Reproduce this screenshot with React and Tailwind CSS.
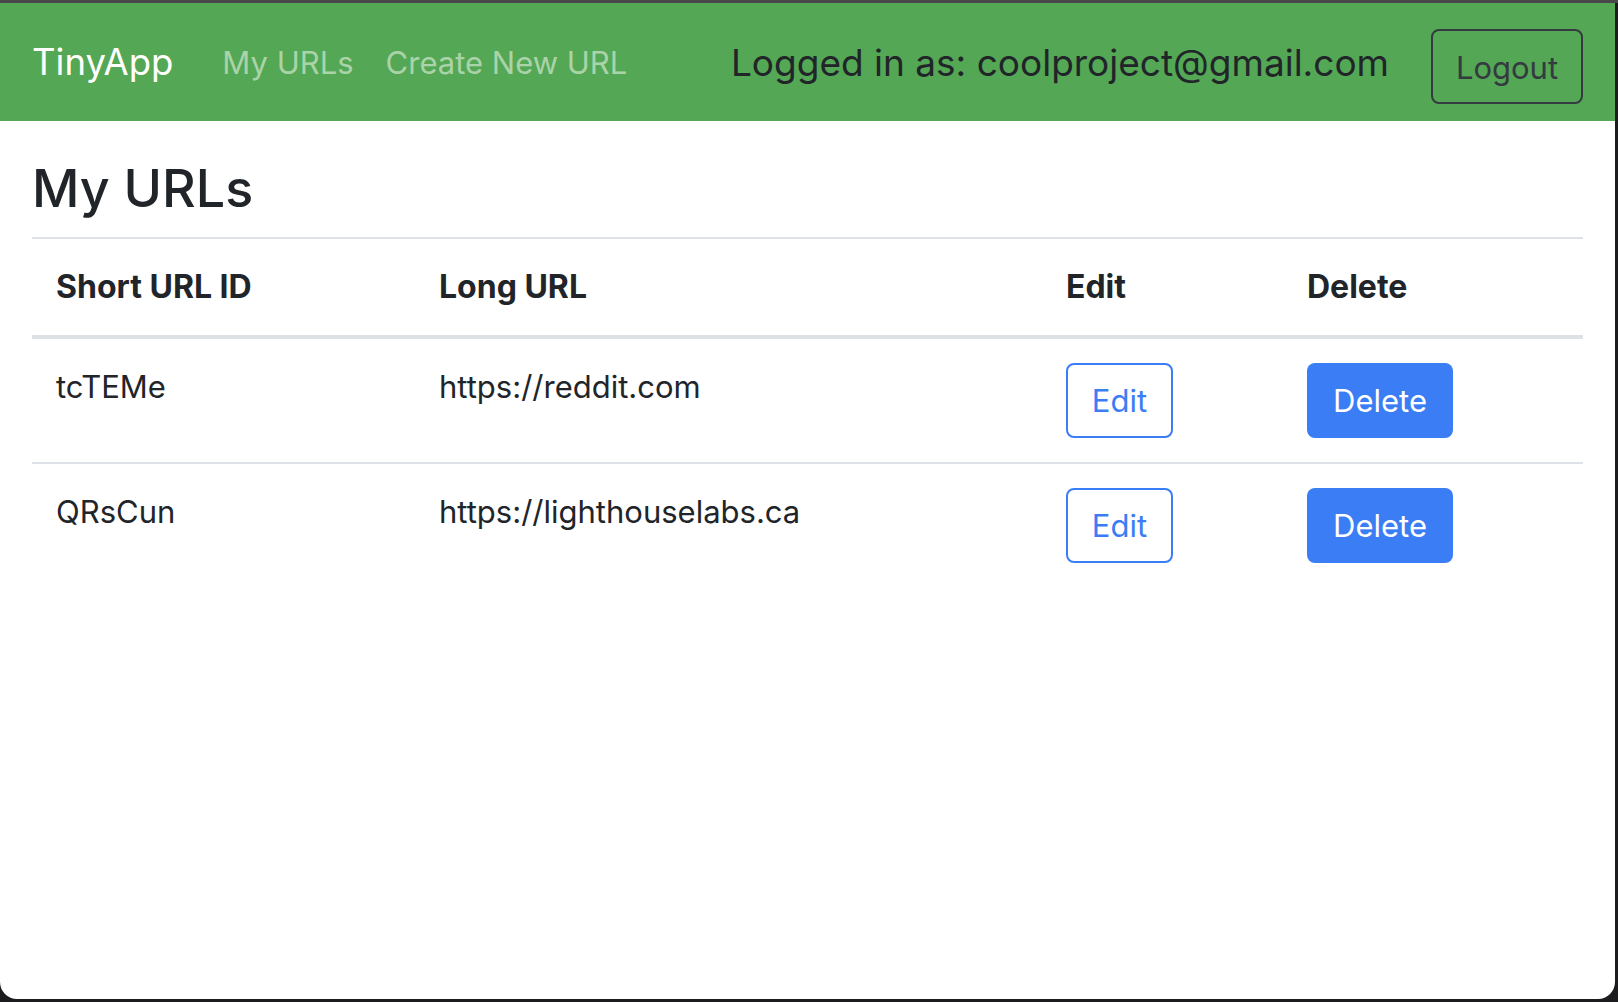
const rows = [
  { id: "tcTEMe", url: "https://reddit.com" },
  { id: "QRsCun", url: "https://lighthouselabs.ca" },
];

const Navbar = () => {
  return (
    <nav className="h-[118px] bg-[#54a754] px-[32px] flex items-center">
      <a className="text-[36.5px] text-white leading-none mr-[49px]">TinyApp</a>
      <div className="flex items-center gap-[32px] text-[31px] text-[#aad3a9] leading-none">
        <a>My URLs</a>
        <a>Create New URL</a>
      </div>
      <div className="ml-auto flex items-center">
        <span className="text-[37px] text-[#212529] leading-none">Logged in as: coolproject@gmail.com</span>
        <button className="ml-[42px] mt-[9px] w-[152px] h-[75px] pt-[3px] border-2 border-[#343a40] rounded-[8px] text-[31px] text-[#343a40] flex items-center justify-center">
          Logout
        </button>
      </div>
    </nav>
  );
};

const App = () => {
  return (
    <div className="w-[1618px] h-[1002px] bg-[#1c1c1e] overflow-hidden font-['Inter','Liberation_Sans',sans-serif]">
      <div className="h-[3px] bg-[#48484a]" />
      <div className="w-[1615px] h-[996px] bg-white rounded-b-[17px] overflow-hidden">
        <Navbar />
        <main className="px-[32px]">
          <h1 className="mt-[37px] text-[52px] font-medium leading-[1.2] text-[#212529]">My URLs</h1>
          <table className="mt-[17px] w-[1551px] table-fixed border-collapse text-[31px] leading-[48px] text-[#212529]">
            <colgroup>
              <col className="w-[383px]" />
              <col className="w-[627px]" />
              <col className="w-[241px]" />
              <col className="w-[300px]" />
            </colgroup>
            <thead>
              <tr className="border-t-2 border-b-4 border-[#dee2e6]">
                <th className="p-[24px] text-left text-[32px] font-bold align-bottom">Short URL ID</th>
                <th className="p-[24px] text-left text-[32px] font-bold align-bottom">Long URL</th>
                <th className="p-[24px] text-left text-[32px] font-bold align-bottom">Edit</th>
                <th className="p-[24px] text-left text-[32px] font-bold align-bottom">Delete</th>
              </tr>
            </thead>
            <tbody>
              {rows.map((r, i) => (
                <tr key={r.id} className={i > 0 ? "border-t-2 border-[#dee2e6]" : ""}>
                  <td className="p-[24px] align-top">{r.id}</td>
                  <td className="p-[24px] align-top">{r.url}</td>
                  <td className="p-[24px] align-top">
                    <button className="w-[107px] h-[75px] border-2 border-[#3b7df4] rounded-[8px] text-[#3b7df4] flex items-center justify-center">
                      Edit
                    </button>
                  </td>
                  <td className="p-[24px] align-top">
                    <button className="w-[146px] h-[75px] bg-[#3b7df4] rounded-[8px] text-white flex items-center justify-center">
                      Delete
                    </button>
                  </td>
                </tr>
              ))}
            </tbody>
          </table>
        </main>
      </div>
    </div>
  );
};

export default App;
